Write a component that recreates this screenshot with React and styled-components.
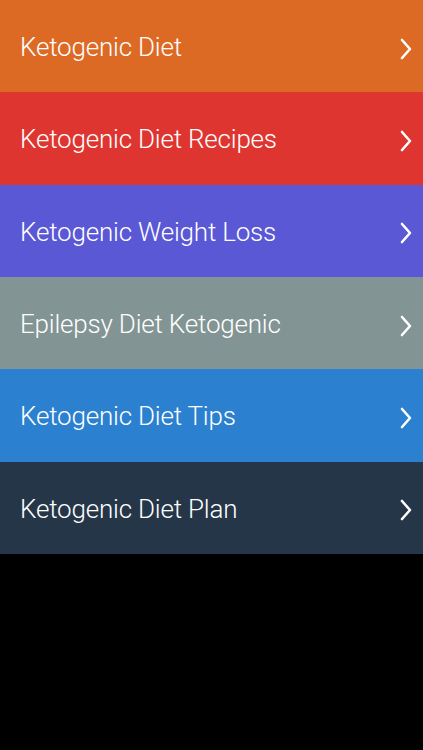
import React from "react";
import styled, { createGlobalStyle } from "styled-components";

const GlobalStyle = createGlobalStyle`
  html, body {
    margin: 0;
    padding: 0;
    background: #000;
  }
  #root {
    min-height: 100vh;
    background: #000;
  }
`;

const List = styled.ul`
  list-style: none;
  margin: 0;
  padding: 0;
  height: 554px;
  display: flex;
  flex-direction: column;
`;

const Row = styled.li`
  flex: 1;
  display: flex;
  align-items: center;
  justify-content: space-between;
  padding: 2px 10px 0 20px;
  background-color: ${(p) => p.$color};
  color: #fff;
  font-family: Roboto, "Liberation Sans", sans-serif;
  font-weight: 300;
  font-size: 26px;
  letter-spacing: -0.2px;
`;

const Label = styled.span`
  white-space: nowrap;
`;

const Arrow = styled.svg`
  margin-top: 3px;
`;

const Chevron = () => (
  <Arrow width="14" height="22" viewBox="0 0 14 22" fill="none">
    <path
      d="M3 2 L11 11 L3 20"
      stroke="#fff"
      strokeWidth="2.6"
      strokeLinecap="round"
      strokeLinejoin="round"
    />
  </Arrow>
);

const items = [
  { title: "Ketogenic Diet", color: "#dd6a24" },
  { title: "Ketogenic Diet Recipes", color: "#df3530" },
  { title: "Ketogenic Weight Loss", color: "#5a58d5" },
  { title: "Epilepsy Diet Ketogenic", color: "#829594" },
  { title: "Ketogenic Diet Tips", color: "#2b81d0" },
  { title: "Ketogenic Diet Plan", color: "#253648" },
];

export default function App() {
  return (
    <>
      <GlobalStyle />
      <List>
        {items.map((item) => (
          <Row key={item.title} $color={item.color}>
            <Label>{item.title}</Label>
            <Chevron />
          </Row>
        ))}
      </List>
    </>
  );
}
